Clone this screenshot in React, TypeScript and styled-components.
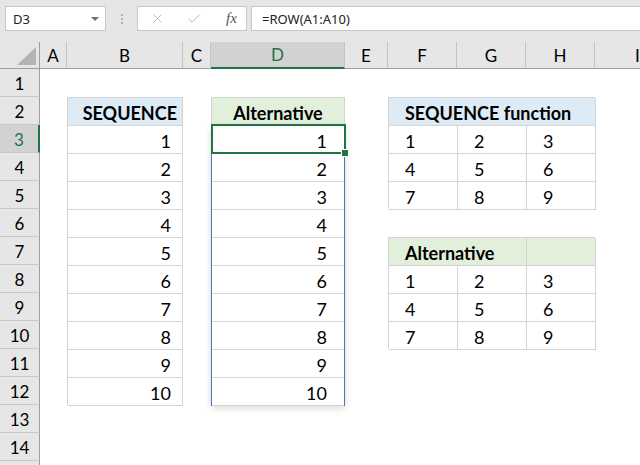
import React from 'react';
import styled, { createGlobalStyle } from 'styled-components';
import { X, Check } from 'lucide-react';

const GlobalStyle = createGlobalStyle`
  html, body {
    margin: 0;
    padding: 0;
    background: #fff;
  }
  body {
    font-family: Lato, "Liberation Sans", sans-serif;
  }
`;

const GREEN = '#217346';
const GRID = '#d4d4d4';

const Window = styled.div`
  width: 640px;
  height: 465px;
  overflow: hidden;
  background: #fff;
  display: flex;
  flex-direction: column;
`;

const FormulaBar = styled.div`
  flex: none;
  height: 42px;
  box-sizing: border-box;
  padding: 6px 0 0 5px;
  background: #e6e6e6;
  display: flex;
  align-items: flex-start;
  font-family: "Noto Sans", "Open Sans", sans-serif;
  color: #222;
`;

const NameBox = styled.div`
  width: 101px;
  height: 25px;
  box-sizing: border-box;
  background: #fff;
  border: 1px solid #c6c6c6;
  display: flex;
  align-items: center;
  justify-content: space-between;
  padding: 0 6px 0 7px;
  font-size: 13px;
`;

const DropArrow = styled.span`
  width: 0;
  height: 0;
  border-left: 4px solid transparent;
  border-right: 4px solid transparent;
  border-top: 4px solid #6f6f6f;
`;

const Grip = styled.div`
  width: 31px;
  height: 25px;
  display: flex;
  flex-direction: column;
  align-items: center;
  justify-content: center;
  gap: 2px;
`;

const GripDot = styled.span`
  width: 2px;
  height: 2px;
  background: #b3b3b3;
`;

const ButtonBox = styled.div`
  width: 110px;
  height: 25px;
  box-sizing: border-box;
  background: #fff;
  border: 1px solid #c6c6c6;
  display: flex;
  align-items: center;
  padding-left: 12px;
  gap: 21px;
  color: #b3b3b3;
`;

const Fx = styled.span`
  font-family: "Liberation Serif", serif;
  font-style: italic;
  font-size: 15px;
  color: #555;
  margin-left: 3px;
`;

const FormulaInput = styled.div`
  flex: 1;
  height: 25px;
  margin-left: 4px;
  box-sizing: border-box;
  background: #fff;
  border: 1px solid #c6c6c6;
  border-right: none;
  display: flex;
  align-items: center;
  padding-left: 10px;
  font-size: 13px;
`;

const Sheet = styled.div`
  position: relative;
  display: grid;
  grid-template-columns: 40px 27px 116px 28px 134px 43px 69px 69px 69px 86px;
  grid-template-rows: 27px repeat(15, 28px);
`;

const Corner = styled.div`
  grid-row: 1;
  grid-column: 1;
  background: #e6e6e6;
  border-right: 1px solid #9e9e9e;
  border-bottom: 1px solid #9e9e9e;
  box-sizing: border-box;
`;

const ColHeader = styled.div<{ $active?: boolean }>`
  grid-row: 1;
  box-sizing: border-box;
  background: ${p => (p.$active ? '#d2d2d2' : '#e6e6e6')};
  color: ${p => (p.$active ? GREEN : '#000')};
  border-right: 1px solid #c3c3c3;
  border-bottom: ${p => (p.$active ? `2px solid ${GREEN}` : '1px solid #9e9e9e')};
  display: flex;
  align-items: center;
  justify-content: center;
  font-size: 17px;
`;

const RowHeader = styled.div<{ $active?: boolean }>`
  grid-column: 1;
  box-sizing: border-box;
  background: ${p => (p.$active ? '#d2d2d2' : '#e6e6e6')};
  color: ${p => (p.$active ? GREEN : '#000')};
  border-right: ${p => (p.$active ? `2px solid ${GREEN}` : '1px solid #9e9e9e')};
  border-bottom: 1px solid #c8c8c8;
  display: flex;
  align-items: center;
  justify-content: center;
  padding-top: 2px;
  font-size: 17px;
`;

const Table = styled.div<{ $col: string; $row: string; $cols?: string }>`
  grid-column: ${p => p.$col};
  grid-row: ${p => p.$row};
  display: grid;
  grid-template-columns: ${p => p.$cols || '1fr'};
  grid-auto-rows: 28px;
  align-content: start;
  border-left: 1px solid ${GRID};
  border-top: 1px solid ${GRID};
  box-sizing: border-box;
`;

const Cell = styled.div<{
  $align?: 'left' | 'right' | 'center';
  $bold?: boolean;
  $bg?: string;
  $pad?: number;
  $span?: number;
}>`
  grid-column: span ${p => p.$span || 1};
  box-sizing: border-box;
  background: ${p => p.$bg || '#fff'};
  border-right: 1px solid ${GRID};
  border-bottom: 1px solid ${GRID};
  display: flex;
  align-items: center;
  justify-content: ${p =>
    p.$align === 'left' ? 'flex-start' : p.$align === 'center' ? 'center' : 'flex-end'};
  padding: 2px ${p => (p.$align === 'left' ? 0 : p.$pad ?? 11)}px 0
    ${p => (p.$align === 'left' ? p.$pad ?? 16 : 0)}px;
  font-size: 18px;
  font-weight: ${p => (p.$bold ? 700 : 400)};
  font-variant-numeric: tabular-nums;
  color: #000;
  white-space: nowrap;
`;

const SpillRange = styled.div`
  position: relative;
  grid-row: span 10;
  display: grid;
  grid-auto-rows: 28px;
  margin-left: -1px;
  border: 1px solid #4f74bf;
  border-top: none;
  box-shadow: 0 2px 7px rgba(0, 0, 0, 0.16);
`;

const SpillCell = styled(Cell)`
  border-right: none;
  &:last-of-type {
    border-bottom: none;
  }
`;

const Selection = styled.div`
  position: absolute;
  left: -1px;
  top: -2px;
  right: -2px;
  height: 30px;
  border: 2px solid ${GREEN};
  box-sizing: border-box;
  pointer-events: none;
`;

const FillHandle = styled.span`
  position: absolute;
  right: -5px;
  bottom: -5px;
  width: 6px;
  height: 6px;
  background: ${GREEN};
  border: 1px solid #fff;
`;

const columns = ['A', 'B', 'C', 'D', 'E', 'F', 'G', 'H', 'I'];
const rows = Array.from({ length: 15 }, (_, i) => i + 1);
const seq = Array.from({ length: 10 }, (_, i) => i + 1);
const matrix = [
  [1, 2, 3],
  [4, 5, 6],
  [7, 8, 9],
];

const BLUE_FILL = '#ddebf7';
const GREEN_FILL = '#e2efda';

export default function App() {
  return (
    <>
      <GlobalStyle />
      <Window>
        <FormulaBar>
          <NameBox>
            <span>D3</span>
            <DropArrow />
          </NameBox>
          <Grip>
            <GripDot />
            <GripDot />
            <GripDot />
          </Grip>
          <ButtonBox>
            <X size={15} strokeWidth={1.4} />
            <Check size={16} strokeWidth={1.4} />
            <Fx>fx</Fx>
          </ButtonBox>
          <FormulaInput>=ROW(A1:A10)</FormulaInput>
        </FormulaBar>

        <Sheet>
          <Corner>
            <svg width="40" height="27" viewBox="0 0 40 27">
              <polygon points="36,5 36,23 17,23" fill="#b4b4b4" />
            </svg>
          </Corner>
          {columns.map((c, i) => (
            <ColHeader key={c} $active={c === 'D'} style={{ gridColumn: i + 2 }}>
              {c}
            </ColHeader>
          ))}
          {rows.map(r => (
            <RowHeader key={r} $active={r === 3} style={{ gridRow: r + 1 }}>
              {r < 15 ? r : ''}
            </RowHeader>
          ))}

          <Table $col="3" $row="3 / span 11">
            <Cell $bold $bg={BLUE_FILL} $pad={5}>
              SEQUENCE
            </Cell>
            {seq.map(n => (
              <Cell key={n}>{n}</Cell>
            ))}
          </Table>

          <Table $col="5" $row="3 / span 11">
            <Cell $bold $bg={GREEN_FILL} $align="center" $pad={0}>
              Alternative
            </Cell>
            <SpillRange>
              {seq.map(n => (
                <SpillCell key={n} $pad={17}>
                  {n}
                </SpillCell>
              ))}
              <Selection>
                <FillHandle />
              </Selection>
            </SpillRange>
          </Table>

          <Table $col="7 / span 3" $row="3 / span 4" $cols="69px 69px 69px">
            <Cell $bold $bg={BLUE_FILL} $align="left" $span={3}>
              SEQUENCE function
            </Cell>
            {matrix.flat().map(n => (
              <Cell key={n} $align="left">
                {n}
              </Cell>
            ))}
          </Table>

          <Table $col="7 / span 3" $row="8 / span 4" $cols="69px 69px 69px">
            <Cell $bold $bg={GREEN_FILL} $align="left" $span={2}>
              Alternative
            </Cell>
            <Cell $bg={GREEN_FILL} $align="left" />
            {matrix.flat().map(n => (
              <Cell key={n} $align="left">
                {n}
              </Cell>
            ))}
          </Table>
        </Sheet>
      </Window>
    </>
  );
}
